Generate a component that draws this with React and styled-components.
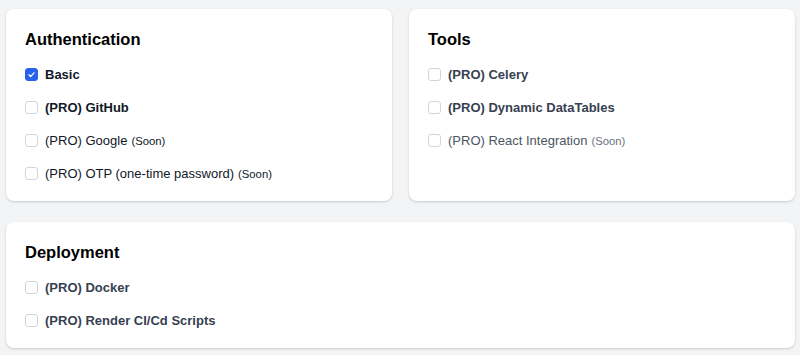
import styled, { createGlobalStyle } from "styled-components";

const GlobalStyle = createGlobalStyle`
  body {
    margin: 0;
    background: #f3f4f6;
    font-family: "Liberation Sans", Arial, sans-serif;
  }
`;

const Page = styled.div`
  display: grid;
  grid-template-columns: 1fr 1fr;
  column-gap: 17px;
  row-gap: 21px;
  padding: 9px 5px 6px 6px;
`;

const Card = styled.section`
  grid-column: ${(p) => (p.$wide ? "1 / -1" : "auto")};
  background: #fff;
  border-radius: 8px;
  box-shadow: 0 1px 3px rgba(0, 0, 0, 0.12), 0 1px 2px rgba(0, 0, 0, 0.06);
  padding: 20px 19px;
`;

const Heading = styled.h3`
  margin: 1px 0 18px;
  font-size: 16.5px;
  line-height: 19px;
  font-weight: 700;
  color: #000;
`;

const List = styled.ul`
  list-style: none;
  margin: 0;
  padding: 0;
  display: flex;
  flex-direction: column;
  gap: 18px;
`;

const Item = styled.li`
  display: flex;
  align-items: center;
  gap: 7px;
  height: 15px;
  font-size: 13px;
  line-height: 15px;
  font-weight: ${(p) => (p.$bold ? 700 : 400)};
  color: ${(p) => p.$color || "#111827"};
`;

const Box = styled.span`
  flex: none;
  box-sizing: border-box;
  width: 13px;
  height: 13px;
  border-radius: 3px;
  border: 1px solid ${(p) => (p.$checked ? "#2563eb" : "#d1d5db")};
  background: ${(p) => (p.$checked ? "#2563eb" : "#fff")};
  display: flex;
  align-items: center;
  justify-content: center;
`;

const Soon = styled.small`
  font-size: 11.3px;
  font-weight: 400;
  margin-left: 4px;
  color: ${(p) => p.$color || "inherit"};
`;

const Check = () => (
  <svg width="9" height="9" viewBox="0 0 16 16" fill="none">
    <path d="M3.5 8.5l3 3 6-6.5" stroke="#fff" strokeWidth="2.2" strokeLinecap="round" strokeLinejoin="round" />
  </svg>
);

const Option = ({ label, checked, bold, soon, color, soonColor }) => (
  <Item $bold={bold} $color={color}>
    <Box $checked={checked}>{checked && <Check />}</Box>
    <span>
      {label}
      {soon && <Soon $color={soonColor}>(Soon)</Soon>}
    </span>
  </Item>
);

const sections = [
  {
    title: "Authentication",
    items: [
      { label: "Basic", checked: true, bold: true },
      { label: "(PRO) GitHub", bold: true },
      { label: "(PRO) Google", soon: true },
      { label: "(PRO) OTP (one-time password)", soon: true },
    ],
  },
  {
    title: "Tools",
    items: [
      { label: "(PRO) Celery", bold: true, color: "#374151" },
      { label: "(PRO) Dynamic DataTables", bold: true, color: "#374151" },
      { label: "(PRO) React Integration", soon: true, color: "#4b5563", soonColor: "#6b7280" },
    ],
  },
  {
    title: "Deployment",
    wide: true,
    items: [
      { label: "(PRO) Docker", bold: true, color: "#374151" },
      { label: "(PRO) Render CI/Cd Scripts", bold: true, color: "#374151" },
    ],
  },
];

export default function App() {
  return (
    <>
      <GlobalStyle />
      <Page>
        {sections.map((s) => (
          <Card key={s.title} $wide={s.wide}>
            <Heading>{s.title}</Heading>
            <List>
              {s.items.map((it) => (
                <Option key={it.label} {...it} />
              ))}
            </List>
          </Card>
        ))}
      </Page>
    </>
  );
}
